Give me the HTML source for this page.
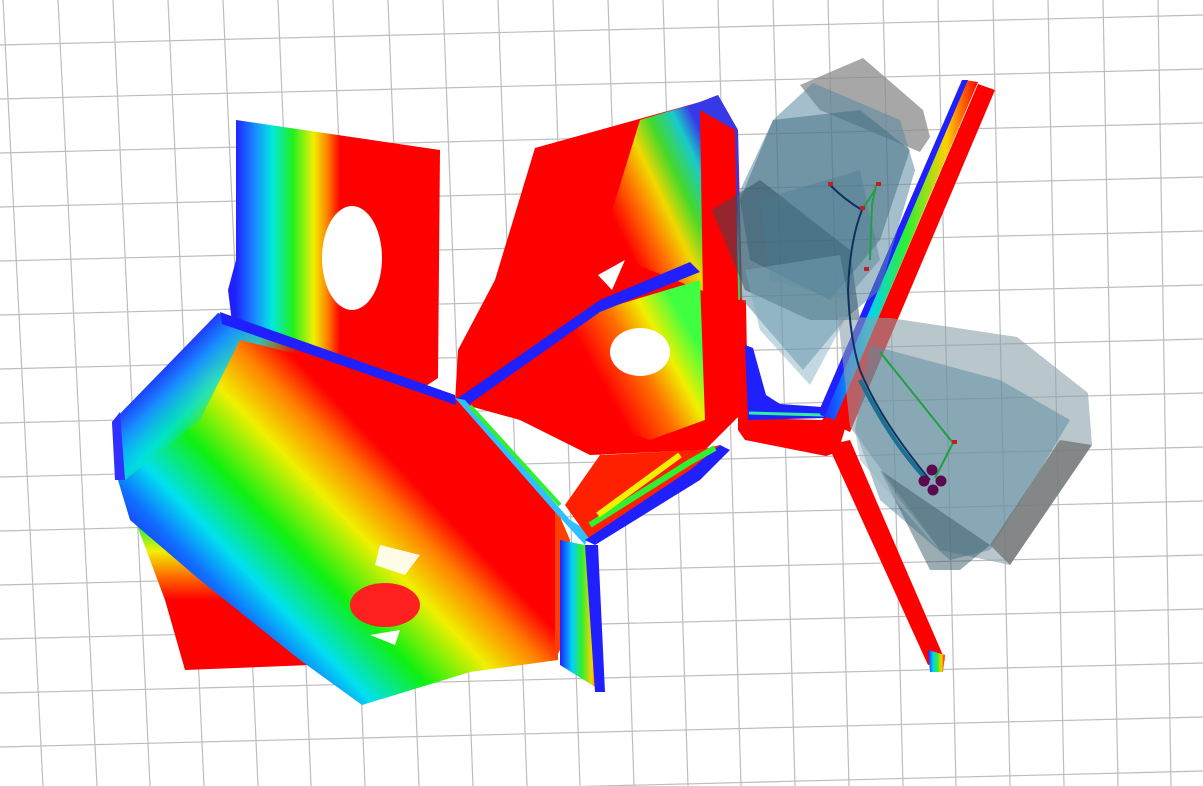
<!DOCTYPE html>
<html><head><meta charset="utf-8"><style>html,body{margin:0;padding:0;background:#fff;overflow:hidden}svg{display:block}</style></head>
<body>
<svg width="1203" height="786" viewBox="0 0 1203 786" xmlns="http://www.w3.org/2000/svg">
<defs>
<linearGradient id="gw" x1="235" y1="0" x2="340" y2="0" gradientUnits="userSpaceOnUse">
<stop offset="0" stop-color="#2020ff"/><stop offset="0.2" stop-color="#1890ff"/><stop offset="0.35" stop-color="#00e8e0"/><stop offset="0.55" stop-color="#20f020"/><stop offset="0.75" stop-color="#f0f000"/><stop offset="0.88" stop-color="#ff8000"/><stop offset="1" stop-color="#ff0000"/></linearGradient>
<linearGradient id="gf" x1="185" y1="610" x2="420" y2="385" gradientUnits="userSpaceOnUse">
<stop offset="0" stop-color="#2020f0"/><stop offset="0.12" stop-color="#1070ff"/><stop offset="0.22" stop-color="#00e0f0"/><stop offset="0.38" stop-color="#10f010"/><stop offset="0.55" stop-color="#f0f000"/><stop offset="0.68" stop-color="#ff8000"/><stop offset="0.78" stop-color="#ff0000"/><stop offset="1" stop-color="#ff0000"/></linearGradient>
<linearGradient id="gt" x1="160" y1="362" x2="225" y2="427" gradientUnits="userSpaceOnUse">
<stop offset="0" stop-color="#2020ff"/><stop offset="0.3" stop-color="#1890ff"/><stop offset="0.6" stop-color="#00e0e0" stop-opacity="0.8"/><stop offset="1" stop-color="#20f020" stop-opacity="0"/></linearGradient>
<linearGradient id="gm" x1="705" y1="140" x2="600" y2="190" gradientUnits="userSpaceOnUse">
<stop offset="0" stop-color="#2040ff"/><stop offset="0.15" stop-color="#00e0e0"/><stop offset="0.35" stop-color="#30f030"/><stop offset="0.55" stop-color="#f0f000"/><stop offset="0.75" stop-color="#ff8000"/><stop offset="1" stop-color="#ff0000"/></linearGradient>
<linearGradient id="gi" x1="690" y1="330" x2="600" y2="380" gradientUnits="userSpaceOnUse">
<stop offset="0" stop-color="#40ff40"/><stop offset="0.3" stop-color="#f0f000"/><stop offset="0.6" stop-color="#ff7000"/><stop offset="1" stop-color="#ff0000"/></linearGradient>
<linearGradient id="gs" x1="0" y1="0" x2="1" y2="0">
<stop offset="0" stop-color="#2020ff"/><stop offset="0.3" stop-color="#00d0ff"/><stop offset="0.55" stop-color="#30f030"/><stop offset="0.8" stop-color="#ffd000"/><stop offset="1" stop-color="#ff0000"/></linearGradient>
<linearGradient id="gbl" x1="0" y1="530" x2="0" y2="600" gradientUnits="userSpaceOnUse">
<stop offset="0" stop-color="#40f040"/><stop offset="0.3" stop-color="#f0f000"/><stop offset="0.7" stop-color="#ff6000"/><stop offset="1" stop-color="#ff0000"/></linearGradient>
</defs>
<rect width="1203" height="786" fill="#fff"/>
<g stroke="#bdbdbd" stroke-width="1.2" fill="none">
<line x1="0" y1="45" x2="1203" y2="15"/><line x1="0" y1="99" x2="1203" y2="69"/><line x1="0" y1="153" x2="1203" y2="123"/><line x1="0" y1="207" x2="1203" y2="177"/><line x1="0" y1="261" x2="1203" y2="231"/><line x1="0" y1="315" x2="1203" y2="285"/><line x1="0" y1="369" x2="1203" y2="339"/><line x1="0" y1="423" x2="1203" y2="393"/><line x1="0" y1="477" x2="1203" y2="447"/><line x1="0" y1="531" x2="1203" y2="501"/><line x1="0" y1="585" x2="1203" y2="555"/><line x1="0" y1="639" x2="1203" y2="609"/><line x1="0" y1="693" x2="1203" y2="663"/><line x1="0" y1="747" x2="1203" y2="717"/><line x1="0" y1="801" x2="1203" y2="771"/>
<line x1="3" y1="0" x2="43" y2="786"/><line x1="58" y1="0" x2="97" y2="786"/><line x1="113" y1="0" x2="150" y2="786"/><line x1="168" y1="0" x2="204" y2="786"/><line x1="223" y1="0" x2="258" y2="786"/><line x1="278" y1="0" x2="311" y2="786"/><line x1="333" y1="0" x2="365" y2="786"/><line x1="388" y1="0" x2="419" y2="786"/><line x1="443" y1="0" x2="473" y2="786"/><line x1="498" y1="0" x2="527" y2="786"/><line x1="553" y1="0" x2="580" y2="786"/><line x1="608" y1="0" x2="634" y2="786"/><line x1="663" y1="0" x2="688" y2="786"/><line x1="718" y1="0" x2="741" y2="786"/><line x1="773" y1="0" x2="795" y2="786"/><line x1="828" y1="0" x2="849" y2="786"/><line x1="883" y1="0" x2="903" y2="786"/><line x1="938" y1="0" x2="956" y2="786"/><line x1="993" y1="0" x2="1010" y2="786"/><line x1="1048" y1="0" x2="1064" y2="786"/><line x1="1103" y1="0" x2="1118" y2="786"/><line x1="1158" y1="0" x2="1171" y2="786"/>
</g>
<!-- left wall -->
<path d="M236,120 L440,150 L438,378 L420,390 L300,345 L232,322 L228,290 L236,260 Z" fill="url(#gw)"/>
<ellipse cx="352" cy="258" rx="30" ry="52" fill="#fff"/>
<!-- middle wall -->
<path d="M535,148 L700,102 L718,95 L738,130 L745,410 L705,450 L590,455 L520,420 L455,402 L458,350 L495,280 Z" fill="#ff0000"/>
<path d="M640,120 L700,102 L718,95 L738,130 L740,300 L700,290 L650,270 L600,250 Z" fill="url(#gm)" opacity="0.9"/>
<path d="M700,110 L735,130 L740,400 L705,420 Z" fill="#ff0000"/>
<path d="M470,400 L600,310 L700,280 L705,420 L650,440 L520,420 Z" fill="url(#gi)"/>
<path d="M470,400 L520,420 L600,455 L650,440 L520,400 Z" fill="#ff0000"/>
<ellipse cx="640" cy="352" rx="30" ry="24" fill="#fff"/>
<path d="M598,275 L625,260 L612,290 Z" fill="#fff"/>
<path d="M455,400 L600,300 L690,262 L700,272 L600,312 L468,405 Z" fill="#2020ff"/>
<!-- bottom-left red piece -->
<path d="M135,520 L210,580 L310,665 L185,670 L165,600 Z" fill="url(#gbl)"/>
<!-- floor -->
<path d="M112,422 L218,313 L300,342 L455,398 L555,505 L558,660 L470,672 L362,705 L300,660 L200,580 L130,520 L115,470 Z" fill="url(#gf)"/>
<path d="M112,422 L218,313 L300,342 L455,398 L445,405 L300,355 L240,340 L200,420 L125,480 Z" fill="url(#gt)"/>
<path d="M220,312 L455,395 L456,405 L222,324 Z" fill="#2020ff"/>
<path d="M112,422 L120,412 L125,480 L115,480 Z" fill="#3030ff"/>
<ellipse cx="385" cy="605" rx="35" ry="22" fill="#ff2020"/>
<path d="M380,545 L420,555 L405,575 L375,565 Z" fill="#fff" opacity="0.9"/>
<path d="M370,635 L400,630 L395,645 Z" fill="#fff"/>
<!-- wall under floor right -->
<path d="M555,505 L570,540 L560,650 L555,660 Z" fill="#ff4000"/>
<path d="M560,540 L585,545 L600,690 L560,665 Z" fill="url(#gs)"/>
<path d="M585,545 L598,545 L605,692 L595,692 Z" fill="#2020ff"/>
<path d="M455,398 L465,400 L570,520 L590,532 L585,545 L555,512 Z" fill="#30c0ff"/>
<path d="M470,406 L560,505" stroke="#30f030" stroke-width="4"/>
<!-- lower bracket -->
<path d="M565,505 L600,455 L700,450 L720,445 L690,475 L590,540 Z" fill="#ff2000"/>
<path d="M585,540 L690,470 L720,445 L730,450 L700,480 L595,545 Z" fill="#2020ff"/>
<path d="M590,525 L690,462 L715,448" stroke="#30f030" stroke-width="6" fill="none"/>
<path d="M598,515 L680,455" stroke="#f0f000" stroke-width="6" fill="none"/>
<!-- right bracket -->
<path d="M738,300 L746,300 L748,418 L822,420 L838,400 L850,412 L838,452 L826,456 L745,440 L738,430 Z" fill="#ff0000"/>
<path d="M745,345 L753,348 L766,395 L780,404 L822,407 L826,418 L748,420 Z" fill="#2020ff"/>
<path d="M749,413 L824,415" stroke="#30f0a0" stroke-width="3"/>
<!-- right beam -->
<path d="M965,80 L978,82 L835,420 L820,415 Z" fill="url(#gs)"/>
<path d="M962,80 L968,80 L825,415 L818,413 Z" fill="#2020ff"/>
<path d="M978,84 L995,90 L850,432 L833,424 Z" fill="#ff0000"/>
<path d="M828,445 L850,440 L945,660 L928,665 Z" fill="#ff0000"/>
<path d="M928,650 L945,655 L943,672 L930,672 Z" fill="url(#gs)"/>
<!-- upper cubes -->
<g>
<path d="M863,58 L923,110 L930,137 L920,152 L820,110 L800,85 Z" fill="#8a8a8a" opacity="0.75"/>
<path d="M813,83 L900,120 L915,170 L880,290 L847,317 L803,370 L740,297 L737,197 L773,120 Z" fill="#5a8aa0" opacity="0.55"/>
<path d="M773,120 L860,110 L910,150 L880,240 L830,300 L750,260 L740,200 Z" fill="#3e6c80" opacity="0.5"/>
<path d="M712,210 L760,180 L850,250 L860,320 L810,320 L745,290 Z" fill="#2c4c5c" opacity="0.5"/>
<path d="M760,200 L860,170 L880,260 L845,300 L770,280 Z" fill="#4a7a90" opacity="0.4"/>
<path d="M745,270 L840,255 L850,310 L810,385 L760,330 Z" fill="#7aa8bc" opacity="0.45"/>
</g>
<!-- lower cubes -->
<g>
<path d="M838,317 L890,318 L1017,337 L1088,393 L1092,445 L1010,565 L940,550 L850,427 Z" fill="#8aa0a8" opacity="0.6"/>
<path d="M870,345 L1000,380 L1070,420 L1040,470 L990,550 L950,560 L880,500 L855,430 Z" fill="#5a8aa0" opacity="0.5"/>
<path d="M1060,440 L1092,445 L1010,565 L990,545 Z" fill="#777" opacity="0.8"/>
<path d="M880,470 L990,545 L960,570 L930,570 Z" fill="#3a5a68" opacity="0.5"/>
<path d="M855,430 L900,500 L940,550 L930,540 L860,460 Z" fill="#9ab8c4" opacity="0.5"/>
</g>
<!-- trajectories -->
<g fill="none" stroke-width="2">
<path d="M830,185 Q845,200 862,210 Q850,240 848,290 Q850,340 860,370 Q880,420 930,480" stroke="#103060"/>
<path d="M862,210 L875,190" stroke="#20a040"/>
<path d="M876,185 L872,205 L870,260" stroke="#20a040"/>
<path d="M880,352 L953,443 L935,478" stroke="#20a040"/>
<path d="M860,380 Q890,440 925,478" stroke="#1a7090" stroke-width="4"/>
</g>
<g fill="#c02020"><rect x="828" y="182" width="5" height="4"/><rect x="876" y="182" width="5" height="4"/><rect x="860" y="206" width="5" height="4"/><rect x="864" y="267" width="5" height="4"/><rect x="952" y="440" width="5" height="4"/></g>
<g fill="#5a0a50"><circle cx="932" cy="470" r="5.5"/><circle cx="924" cy="481" r="5.5"/><circle cx="941" cy="481" r="5.5"/><circle cx="933" cy="490" r="5.5"/></g>
</svg>
</body></html>
